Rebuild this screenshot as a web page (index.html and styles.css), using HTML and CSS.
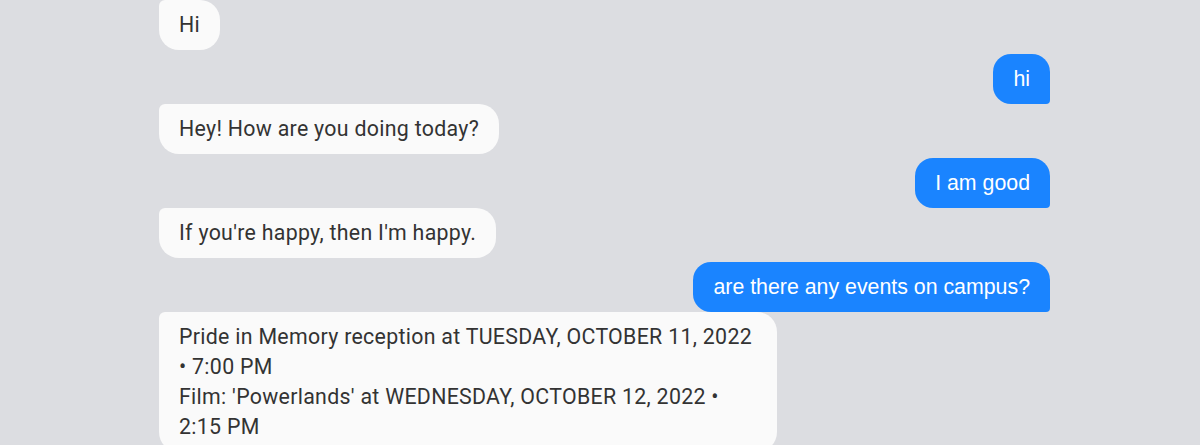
FILE: index.html
```html
<!DOCTYPE html>
<html lang="en">
<head>
<meta charset="utf-8">
<title>Chat</title>
<link rel="stylesheet" href="styles.css">
</head>
<body>
<div class="chat">
  <div class="msg bot">Hi</div>
  <div class="msg user">hi</div>
  <div class="msg bot">Hey! How are you doing today?</div>
  <div class="msg user">I am good</div>
  <div class="msg bot">If you're happy, then I'm happy.</div>
  <div class="msg user">are there any events on campus?</div>
  <div class="msg bot">Pride in Memory reception at TUESDAY, OCTOBER 11, 2022 • 7:00 PM<br>Film: 'Powerlands' at WEDNESDAY, OCTOBER 12, 2022 • 2:15 PM</div>
</div>
</body>
</html>
```
FILE: styles.css
```css
html, body {
  margin: 0;
  padding: 0;
  background: #dcdde1;
  height: 100%;
  overflow: hidden;
}
.chat {
  width: 900px;
  margin: 0 auto;
  display: flex;
  flex-direction: column;
  align-items: flex-start;
}
.msg {
  box-sizing: border-box;
  max-width: 618px;
  padding: 10px 20px;
  font-size: 21.33px;
  line-height: 30px;
}
.bot {
  margin-left: 9px;
  background: #fafafa;
  color: #333333;
  font-family: Roboto, "Liberation Sans", sans-serif;
  letter-spacing: 0.3px;
  border-radius: 6px 20px 20px 20px;
}
.user {
  align-self: flex-end;
  margin-top: 4px;
  background: #1a84ff;
  color: #ffffff;
  font-family: "Liberation Sans", Arial, sans-serif;
  border-radius: 18px 18px 4px 18px;
}
```
